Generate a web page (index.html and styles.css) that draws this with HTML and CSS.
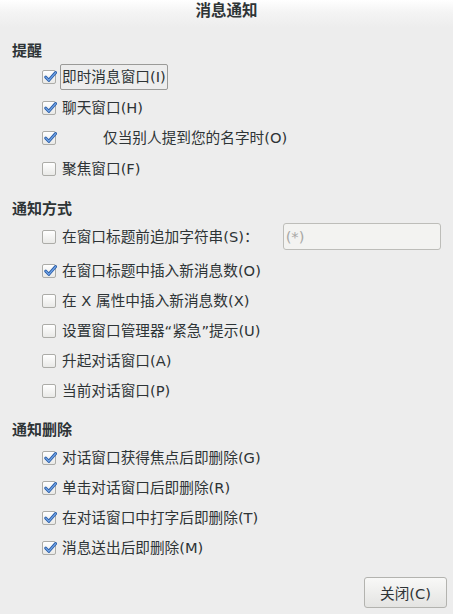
FILE: index.html
```html
<!DOCTYPE html>
<html lang="zh-CN">
<head>
<meta charset="utf-8">
<title>消息通知</title>
<link rel="stylesheet" href="styles.css">
</head>
<body>
<div class="dialog">
  <div class="titlebar">消息通知</div>

  <section class="section s1">
    <div class="header">提醒</div>
    <div class="rows">
      <div class="row"><span class="cb checked"></span><span class="label focus">即时消息窗口(I)</span></div>
      <div class="row"><span class="cb checked"></span><span class="label">聊天窗口(H)</span></div>
      <div class="row"><span class="cb checked"></span><span class="label indent">仅当别人提到您的名字时(O)</span></div>
      <div class="row"><span class="cb"></span><span class="label">聚焦窗口(F)</span></div>
    </div>
  </section>

  <section class="section s2">
    <div class="header">通知方式</div>
    <div class="rows">
      <div class="row row-input"><span class="cb"></span><span class="label">在窗口标题前追加字符串(S)：</span><span class="entry">(*)</span></div>
      <div class="row"><span class="cb checked"></span><span class="label">在窗口标题中插入新消息数(O)</span></div>
      <div class="row"><span class="cb"></span><span class="label">在 X 属性中插入新消息数(X)</span></div>
      <div class="row"><span class="cb"></span><span class="label">设置窗口管理器“紧急”提示(U)</span></div>
      <div class="row"><span class="cb"></span><span class="label">升起对话窗口(A)</span></div>
      <div class="row"><span class="cb"></span><span class="label">当前对话窗口(P)</span></div>
    </div>
  </section>

  <section class="section s3">
    <div class="header">通知删除</div>
    <div class="rows">
      <div class="row"><span class="cb checked"></span><span class="label">对话窗口获得焦点后即删除(G)</span></div>
      <div class="row"><span class="cb checked"></span><span class="label">单击对话窗口后即删除(R)</span></div>
      <div class="row"><span class="cb checked"></span><span class="label">在对话窗口中打字后即删除(T)</span></div>
      <div class="row"><span class="cb checked"></span><span class="label">消息送出后即删除(M)</span></div>
    </div>
  </section>

  <div class="footer"><button class="btn">关闭(C)</button></div>
</div>
</body>
</html>
```
FILE: styles.css
```css
html, body {
  margin: 0;
  padding: 0;
}
body {
  background: #ededed;
  font-family: "DejaVu Sans", "Noto Sans CJK SC", sans-serif;
  font-size: 14.67px;
  color: #2e3436;
}
.dialog {
  width: 453px;
  height: 614px;
  display: flex;
  flex-direction: column;
  background: #ededed;
  overflow: hidden;
}
.titlebar {
  height: 27px;
  line-height: 23px;
  text-align: center;
  font-weight: bold;
  font-size: 15.5px;
  background: linear-gradient(#ffffff 0%, #f4f4f4 45%, #ededed 100%);
  flex: none;
}
.section {
  padding-left: 12px;
}
.header {
  height: 20px;
  line-height: 20px;
  font-weight: bold;
  font-size: 15px;
}
.s1 { margin-top: 13.5px; }
.s2 { margin-top: 17px; }
.s3 { margin-top: 16px; }
.rows {
  display: flex;
  flex-direction: column;
  padding-left: 30px;
}
.s1 .rows { margin-top: 3.5px; gap: 4.5px; }
.s2 .rows { margin-top: 4.7px; gap: 4px; }
.s3 .rows { margin-top: 5.3px; gap: 4px; }
.row {
  height: 26px;
  display: flex;
  align-items: center;
}
.row-input {
  height: 27px;
  margin-bottom: 4px;
}
.cb {
  width: 14px;
  height: 14px;
  box-sizing: border-box;
  border: 1px solid #acaca8;
  border-radius: 2px;
  background: linear-gradient(#ffffff, #e9e9e7);
  margin-right: 4px;
  flex: none;
  position: relative;
}
.cb.checked::after {
  content: "";
  position: absolute;
  left: 1px;
  top: 0px;
  width: 13px;
  height: 12px;
  background: url("data:image/svg+xml;utf8,<svg xmlns='http://www.w3.org/2000/svg' width='13' height='12' viewBox='0 0 13 12'><path d='M1.8 6.2 L4.8 9.3 L11.6 1.6' fill='none' stroke='%232a5ea8' stroke-width='3' stroke-linecap='round' stroke-linejoin='round'/><path d='M1.8 6.2 L4.8 9.3 L11.6 1.6' fill='none' stroke='%2375a7ea' stroke-width='1.2' stroke-linecap='round' stroke-linejoin='round'/></svg>") no-repeat;
}
.label {
  height: 24px;
  line-height: 24px;
  padding: 0 1px;
  border: 1px solid transparent;
  border-radius: 2px;
  white-space: nowrap;
}
.label.focus {
  border-color: #9a9a98;
}
.label.indent {
  padding-left: 42px;
}
.entry {
  margin-left: 22px;
  width: 158px;
  height: 27px;
  box-sizing: border-box;
  border: 1px solid #bdbdb9;
  border-radius: 3px;
  background: #f3f3f1;
  color: #a8a8a6;
  line-height: 25px;
  padding-left: 2px;
}
.footer {
  margin-top: auto;
  display: flex;
  justify-content: flex-end;
  padding: 0 6px 6px 0;
}
.btn {
  width: 83px;
  height: 31px;
  border: 1px solid #b3b3af;
  border-radius: 3px;
  background: linear-gradient(#f8f8f7, #e4e4e2);
  font-family: "DejaVu Sans", "Noto Sans CJK SC", sans-serif;
  font-size: 14.67px;
  color: #2e3436;
  padding: 0;
}
```
